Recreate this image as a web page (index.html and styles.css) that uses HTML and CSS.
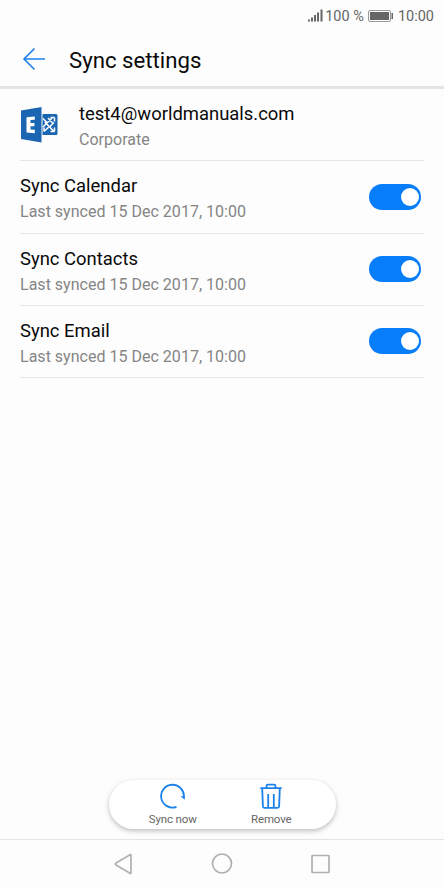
FILE: index.html
```html
<!doctype html>
<html lang="en">
  <head>
    <meta charset="utf-8" />
    <title>Sync settings</title>
    <link rel="stylesheet" href="styles.css">
  </head>
  <body>
    <div class="status-bar">
      <svg class="signal" width="15" height="14" viewBox="0 0 15 14">
        <path d="M1 10.500v2M4 8.500v4M7 6v6.500M10 3.500v9M13.500 0.500v12" />
      </svg>
      <span class="percent">100 %</span>
      <svg class="battery" width="26" height="13" viewBox="0 0 26 13">
        <rect class="case" x="0.500" y="0.500" width="22" height="11" rx="1.500" />
        <rect x="2" y="2" width="19" height="8" />
        <path d="M23.500 3h1.500v6h-1.500z" />
      </svg>
      <span class="clock">10:00</span>
    </div>

    <header class="header">
      <svg class="back" width="24" height="24" viewBox="0 0 24 24">
        <path d="M12.500 1.500 2 12 12.500 22.500M2 12H23" />
      </svg>
      <h1>Sync settings</h1>
    </header>

    <main class="content">
      <div class="row account">
        <svg class="logo" width="38" height="36" viewBox="0 0 38 36">
          <path class="blue" d="M1 3.500 21.500 0v35.500L1 32z" />
          <path class="letter" d="M6.500 10.200 14.800 9.400v3.400l-4.300.3v3h3.900v3.200h-3.900v3.200l4.300.3v3.400L6.500 25.400z" />
          <path class="blue" d="M22.500 7h13.500a1.500 1.500 0 0 1 1.500 1.500v18a1.500 1.500 0 0 1-1.500 1.500H22.500z" />
          <path class="weave" d="M23 11.500l4 4.200M24 24.500l4.500-4.300M23 20l9-9M24.800 15l8.700 9M29.500 20l4.500-4.500M28 11l5.500 6M34.500 10.500h-4M34.500 10.500v4M34.500 24.500v-4M34.500 24.500h-4M24 24.500v-4" />
        </svg>
        <div class="text">
          <div class="label email">test4@worldmanuals.com</div>
          <div class="detail corporate">Corporate</div>
        </div>
      </div>
      <div class="row">
        <div class="text">
          <div class="label">Sync Calendar</div>
          <div class="detail">Last synced 15 Dec 2017, 10:00</div>
        </div>
        <label class="toggle">
          <input type="checkbox" checked />
          <span class="slider"></span>
        </label>
      </div>
      <div class="row">
        <div class="text">
          <div class="label">Sync Contacts</div>
          <div class="detail">Last synced 15 Dec 2017, 10:00</div>
        </div>
        <label class="toggle">
          <input type="checkbox" checked />
          <span class="slider"></span>
        </label>
      </div>
      <div class="row">
        <div class="text">
          <div class="label">Sync Email</div>
          <div class="detail">Last synced 15 Dec 2017, 10:00</div>
        </div>
        <label class="toggle">
          <input type="checkbox" checked />
          <span class="slider"></span>
        </label>
      </div>
    </main>

    <div class="actions">
      <button>
        <svg width="26" height="26" viewBox="0 0 26 26">
          <path d="M16.500 23.800A11.400 11.400 0 1 1 23.800 14.500" />
          <path class="fill" d="M20.500 13.200h4.300v3.600z" />
        </svg>
        <span>Sync now</span>
      </button>
      <button>
        <svg width="26" height="26" viewBox="0 0 26 26">
          <path d="M2.300 5.200h21.400M8.500 5V3q0-1.300 1.300-1.300h6.400q1.300 0 1.300 1.300v2M4.200 5.500l.7 18q.1 1.300 1.400 1.300h13.400q1.300 0 1.400-1.300l.7-18M10.200 11v13M15.800 11v13" />
        </svg>
        <span>Remove</span>
      </button>
    </div>

    <nav class="nav-bar">
      <svg width="22" height="22" viewBox="0 0 22 22">
        <path d="M19 2.200v17.600q0 1-1 .5L3.700 11.800q-1-.8 0-1.500L18 1.700q1-.5 1 .5z" />
      </svg>
      <svg width="22" height="22" viewBox="0 0 22 22">
        <circle cx="11" cy="10.500" r="9.500" />
      </svg>
      <svg width="22" height="22" viewBox="0 0 22 22">
        <rect x="2" y="2.500" width="17" height="17" rx="0.500" />
      </svg>
    </nav>
  </body>
</html>
```
FILE: styles.css
```css
* {
  box-sizing: border-box;
}
body {
  margin: 0;
  width: 444px;
  height: 888px;
  display: flex;
  flex-direction: column;
  overflow: hidden;
  background-color: #fdfdfd;
  color: #0a0a0a;
  font-family: Roboto, "Liberation Sans", sans-serif;
}
svg {
  display: block;
  flex-shrink: 0;
  fill: none;
}
.status-bar {
  height: 32px;
  padding-right: 10px;
  display: flex;
  align-items: center;
  justify-content: flex-end;
  color: #666;
  font-size: 14.5px;
}
.signal {
  margin-right: 2px;
  stroke: #666;
  stroke-width: 2;
}
.battery {
  margin: 0 4px;
  fill: #666;
}
.battery .case {
  fill: none;
  stroke: #999;
}
.header {
  height: 57px;
  padding: 0 22px;
  display: flex;
  align-items: center;
  border-bottom: 3px solid #e4e4e4;
}
.back {
  margin-right: 23px;
  stroke: #1c82ea;
  stroke-width: 1.6;
}
h1 {
  margin: 0;
  padding-top: 2px;
  font-size: 22.2px;
  font-weight: 400;
}
.content {
  flex-grow: 1;
  padding: 0 20px;
}
.row {
  height: 72.2px;
  display: flex;
  align-items: center;
  border-bottom: 1px solid #e6e6e6;
}
.account {
  height: 72.4px;
}
.logo {
  margin-right: 21px;
}
.logo .blue {
  fill: #1a66b3;
}
.logo .letter {
  fill: white;
}
.logo .weave {
  stroke: white;
  stroke-width: 1.5;
}
.text {
  flex-grow: 1;
  padding-top: 5px;
}
.label {
  font-size: 18.45px;
  line-height: 26px;
}
.detail {
  color: #858585;
  font-size: 16.05px;
  line-height: 26px;
}
.toggle {
  position: relative;
  width: 52px;
  height: 26px;
  margin-right: 3px;
}
.toggle input {
  position: absolute;
  margin: 0;
  opacity: 0;
}
.slider {
  position: absolute;
  top: 0;
  left: 0;
  right: 0;
  bottom: 0;
  background-color: #ccc;
  border-radius: 13px;
}
.slider:before {
  position: absolute;
  content: "";
  width: 18px;
  height: 18px;
  left: 4px;
  top: 4px;
  background-color: white;
  border-radius: 50%;
}
input:checked + .slider {
  background-color: #087dfa;
}
input:checked + .slider:before {
  left: 31.5px;
}
.actions {
  width: 227px;
  height: 49px;
  margin: 0 auto 10px;
  padding: 0 15px;
  display: flex;
  border-radius: 25px;
  background-color: white;
  box-shadow: 0 2px 5px rgba(0, 0, 0, 0.25);
}
button {
  flex: 1;
  padding: 3px 0 0;
  display: flex;
  flex-direction: column;
  align-items: center;
  gap: 3px;
  border: none;
  background: none;
  color: #666;
  font-family: inherit;
  font-size: 11.5px;
  line-height: 15px;
  letter-spacing: -0.15px;
}
button svg {
  stroke: #1c82ea;
  stroke-width: 1.8;
}
button .fill {
  fill: #1c82ea;
  stroke: none;
}
.nav-bar {
  height: 49px;
  padding: 0 112px;
  display: flex;
  align-items: center;
  justify-content: space-between;
  border-top: 1px solid #e4e4e4;
}
.nav-bar svg {
  stroke: #b0b0b0;
  stroke-width: 1.7;
}
```
